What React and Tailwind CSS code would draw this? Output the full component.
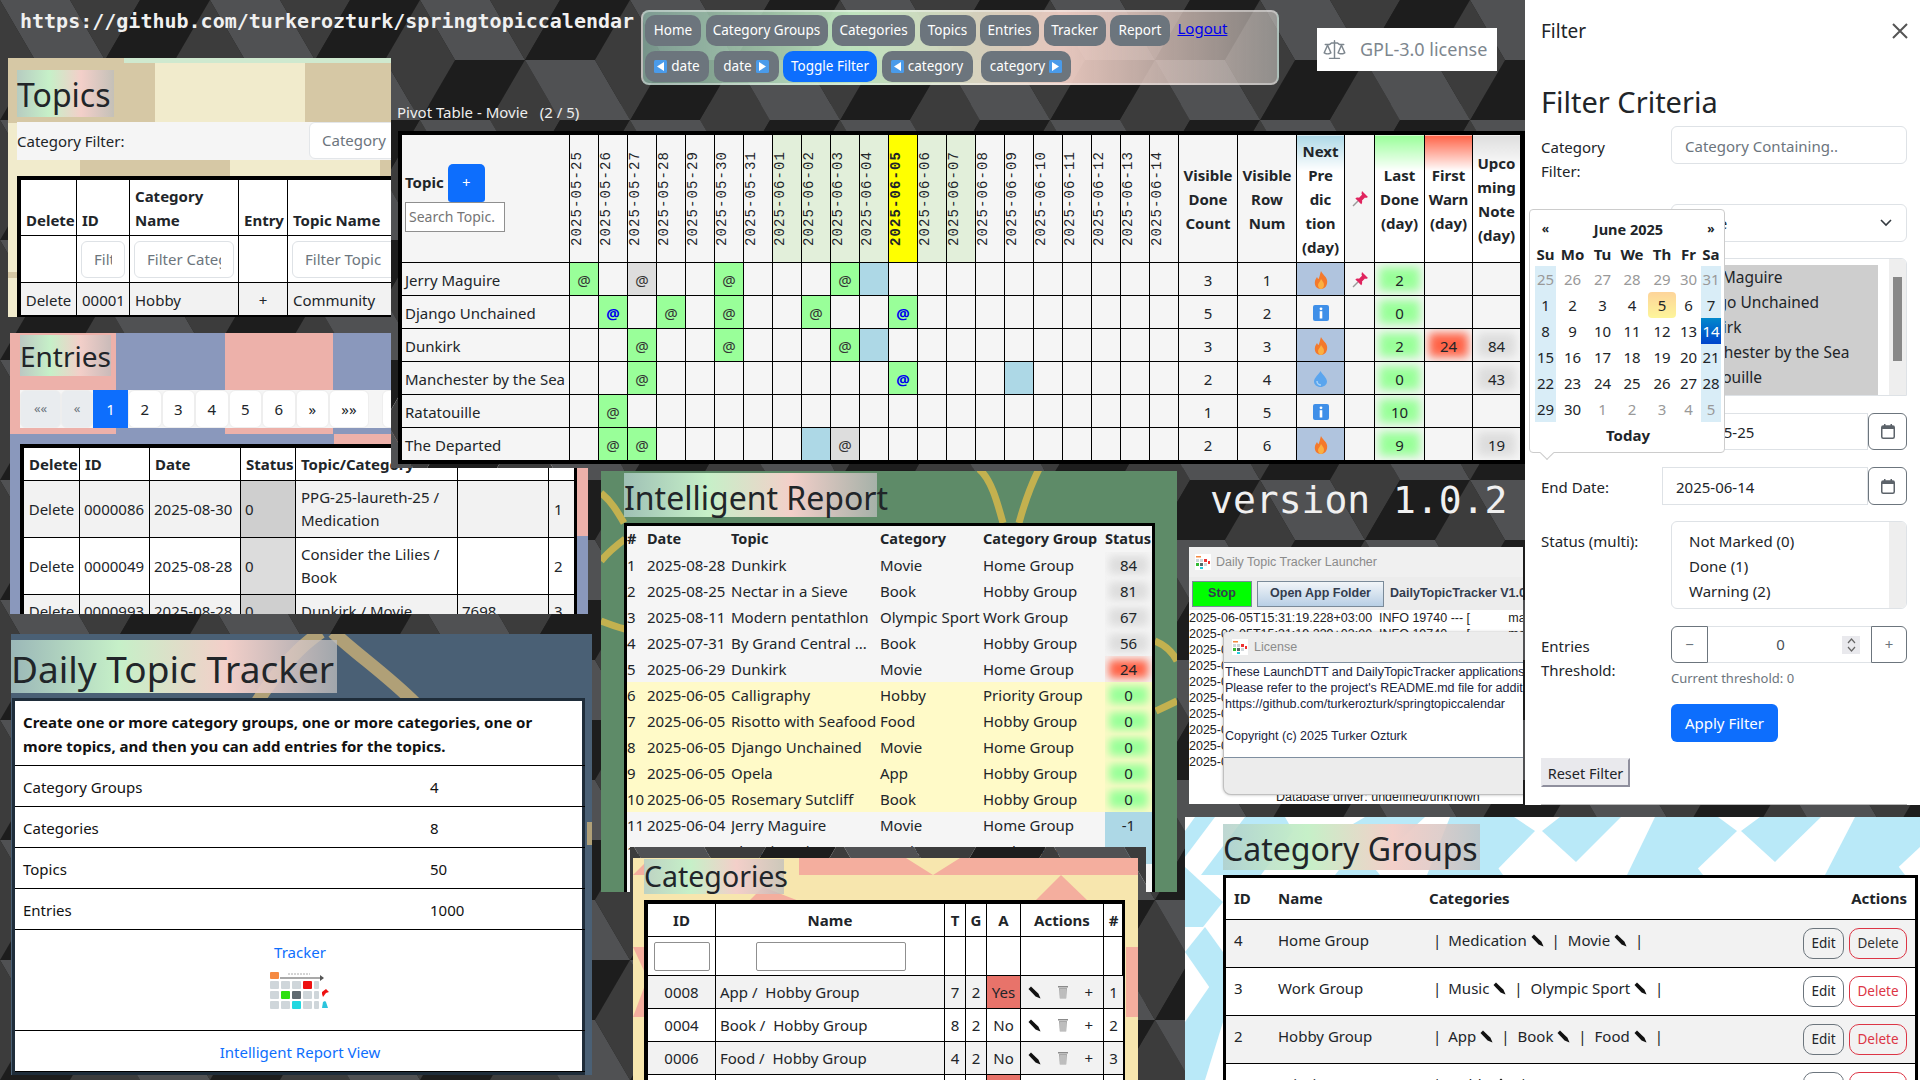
import React from 'react';
import { GoLaw } from 'react-icons/go';

const tri = [[70, 0], [70, 120], [175, 60], [-35, 60]];
const A = 70, H = 60;
function HexBg({ id, x = 0, y = 0 }) {
  return (
    <svg className="absolute left-0 top-0 w-full h-full" aria-hidden="true">
      <defs>
        <pattern id={id} width="210" height="120" patternUnits="userSpaceOnUse" patternTransform={`translate(${-x} ${-y})`}>
          {tri.map(([cx, cy], i) => (
            <g key={i}>
              <polygon fill="#1d1d1d" points={`${cx},${cy} ${cx - A},${cy} ${cx - A / 2},${cy - H} ${cx + A / 2},${cy - H}`} />
              <polygon fill="#505153" points={`${cx},${cy} ${cx - A},${cy} ${cx - A / 2},${cy + H} ${cx + A / 2},${cy + H}`} />
              <polygon fill="#3c3c3c" points={`${cx},${cy} ${cx + A / 2},${cy - H} ${cx + A},${cy} ${cx + A / 2},${cy + H}`} />
            </g>
          ))}
        </pattern>
      </defs>
      <rect width="100%" height="100%" fill={`url(#${id})`} />
    </svg>
  );
}

const titleBg = "font-normal bg-[linear-gradient(90deg,rgba(175,205,200,.8),#c6f0c8_33%,#f3cfc9_66%,rgba(190,190,190,.75))]";

function Fire() {
  return (
    <svg width="14" height="18" viewBox="0 0 14 18" className="mx-auto block">
      <path d="M7 0c1 3 5 5 6 9 1 5-2 9-6 9S0 15 1 10c.4-2 1.6-3 2-4 .5 1 1 2 1.6 2C5.6 6 6 3 7 0z" fill="#f4792b" />
      <path d="M7 8c1 2 3 3 3 6 0 2-1.400 4-3 4s-3-2-3-4c0-2 2-3 3-6z" fill="#fbb040" />
    </svg>
  );
}
function Info() {
  return (
    <svg width="16" height="16" viewBox="0 0 16 16" className="mx-auto block">
      <rect width="16" height="16" rx="2" fill="#3f8fe8" />
      <circle cx="8" cy="3.800" r="1.400" fill="#fff" />
      <rect x="6.700" y="6.200" width="2.600" height="7.300" fill="#fff" />
    </svg>
  );
}
function Drop() {
  return (
    <svg width="13" height="16" viewBox="0 0 13 16" className="mx-auto block">
      <path d="M6.500 0C8 3 13 7 13 10.500 13 13.500 10 16 6.500 16S0 13.500 0 10.500C0 7 5 3 6.500 0z" fill="#5aa5ee" />
      <path d="M3 10c0 2.500 2 4 4 4" stroke="#a9d2f7" strokeWidth="1.500" fill="none" />
    </svg>
  );
}
function Pin() {
  return (
    <svg width="16" height="16" viewBox="0 0 16 16" className="mx-auto block">
      <path d="M6 10 1 15" stroke="#9a9a9a" strokeWidth="1.500" />
      <path d="M10 0l6 6-2 1-1-.5-3 3c.5 2-.1 3-.8 3.800L3.400 7.500C4.200 6.800 5 6.200 7 6.700l3-3L9.500 2.500z" fill="#e0245e" />
    </svg>
  );
}
function Pencil() {
  return (
    <svg width="13" height="13" viewBox="0 0 13 13" className="inline-block align-[-1px]">
      <path d="M.5 3 3 .5l7.500 7.300L12.500 12.500 7.600 10.600z" fill="#111" />
    </svg>
  );
}
function Trash() {
  return (
    <svg width="10" height="14" viewBox="0 0 10 14" className="mx-auto block">
      <rect x="0" y="1" width="10" height="1.500" fill="#8a8a8a" />
      <path d="M1 3h8l-.8 10.500H1.800z" fill="#a8a8a8" />
      <path d="M3 4v9M5 4v9M7 4v9" stroke="#e6e6e6" strokeWidth=".7" />
    </svg>
  );
}
function Arrow({ dir }) {
  return (
    <svg width="13" height="13" viewBox="0 0 13 13" className="inline-block align-[-2px]">
      <rect width="13" height="13" rx="1.500" fill="#4a9bea" />
      <path d={dir === 'l' ? 'M10 2v9L3 6.500z' : 'M3 2v9l7-4.500z'} fill="#fff" />
    </svg>
  );
}
function Cal() {
  return (
    <svg width="14" height="15" viewBox="0 0 14 15" className="block">
      <rect x=".75" y="2" width="12.500" height="12.200" rx="1.500" fill="none" stroke="#5c636a" strokeWidth="1.500" />
      <rect x="1" y="2" width="12" height="3" fill="#5c636a" />
      <rect x="3" y="0" width="1.500" height="3" fill="#5c636a" />
      <rect x="9.500" y="0" width="1.500" height="3" fill="#5c636a" />
    </svg>
  );
}
function AppIcon() {
  return (
    <svg width="16" height="16" viewBox="0 0 16 16" className="block shrink-0">
      <rect width="16" height="16" fill="#fff" />
      <rect x="1" y="2" width="5" height="1.500" fill="#f58a42" />
      <rect x="1" y="5" width="3" height="3" fill="#cfd6da" /><rect x="5" y="5" width="3" height="3" fill="#cfd6da" /><rect x="9" y="5" width="3" height="3" fill="#e33" />
      <rect x="1" y="9" width="3" height="3" fill="#3b3" /><rect x="5" y="9" width="3" height="3" fill="#566" /><rect x="9" y="9" width="3" height="3" fill="#cfd6da" />
      <rect x="5" y="13" width="3" height="2" fill="#2cd" /><rect x="13" y="7" width="2" height="3" fill="#e33" />
    </svg>
  );
}
function TrackerIcon() {
  const colors = [
    ['#cfd6da', '#cfd6da', '#cfd6da', '#ee1111', '#cfd6da'],
    ['#cfd6da', '#2ee010', '#5f6a70', '#cfd6da', '#cfd6da'],
    ['#cfd6da', '#cfd6da', '#22d8e0', '#cfd6da', '#cfd6da'],
  ];
  return (
    <svg width="60" height="38" viewBox="0 0 60 38" className="mx-auto block">
      <rect x="0" y="0" width="9" height="7" rx="1" fill="#f58a42" />
      <path d="M10 6h43" stroke="#555" strokeWidth="1.200" /><path d="M50 3l4 3-4 3z" fill="#555" />
      <path d="M18 2h22" stroke="#aaa" strokeWidth="1" strokeDasharray="2 1" />
      {colors.map((r, j) => r.map((c, i) => (
        <rect key={`${j}-${i}`} x={i * 11} y={9 + j * 10} width={i === 4 ? 5 : 9} height="8" rx="1" fill={c} />
      )))}
      <path d="M52 20l4-3 3 3-3 1-3 4-1-3z" fill="#e11" />
      <path d="M53 30l2-1 1 1 2 6h-6z" fill="#2bc4dc" />
    </svg>
  );
}

const dates = ['2025-05-25','2025-05-26','2025-05-27','2025-05-28','2025-05-29','2025-05-30','2025-05-31','2025-06-01','2025-06-02','2025-06-03','2025-06-04','2025-06-05','2025-06-06','2025-06-07','2025-06-08','2025-06-09','2025-06-10','2025-06-11','2025-06-12','2025-06-13','2025-06-14'];
const pivotRows = [
  { n: 'Jerry Maguire', c: { 0: 'g', 2: 'x', 5: 'g', 9: 'g', 10: 'b' }, vd: 3, vr: 1, next: 'fire', pin: true, last: 2 },
  { n: 'Django Unchained', c: { 1: 'p', 3: 'g', 5: 'g', 8: 'g', 11: 'p' }, vd: 5, vr: 2, next: 'info', last: 0 },
  { n: 'Dunkirk', c: { 2: 'g', 5: 'g', 9: 'g', 10: 'b' }, vd: 3, vr: 3, next: 'fire', last: 2, warn: 24, up: 84 },
  { n: 'Manchester by the Sea', c: { 2: 'g', 11: 'p', 15: 'b' }, vd: 2, vr: 4, next: 'drop', last: 0, up: 43 },
  { n: 'Ratatouille', c: { 1: 'g' }, vd: 1, vr: 5, next: 'info', last: 10 },
  { n: 'The Departed', c: { 1: 'g', 2: 'g', 8: 'b', 9: 'x' }, vd: 2, vr: 6, next: 'fire', last: 9, up: 19 },
];

function DateCell({ v }) {
  if (v === 'g') return <td className="border border-black bg-[#99ff99] text-center text-[#333] p-0">@</td>;
  if (v === 'x') return <td className="border border-black bg-[#dddddd] text-center text-[#333] p-0">@</td>;
  if (v === 'b') return <td className="border border-black bg-[#add8e6] p-0"></td>;
  if (v === 'p') return <td className="border border-black bg-[#99ff99] text-center text-[#0000ee] font-bold p-0">@</td>;
  return <td className="border border-black p-0"></td>;
}

function Pivot() {
  return (
    <section className="absolute left-[391px] top-[104px] w-[1134px] h-[364px] overflow-hidden z-20">
      <HexBg id="hp" x={391} y={104} />
      <div className="relative h-[27px] pl-[6px] text-[15px] leading-[16px] text-[#eeeeee] whitespace-pre">Pivot Table - Movie   (2 / 5)</div>
      <div className="relative mx-[7px] w-[1127px] border-y-[3px] border-l-[3px] border-r-[5px] border-black bg-[#f5f5f5]">
        <table className="table-fixed border-collapse w-[1119px] text-[15px] text-[#212529] [&_td]:pt-[2px]">
          <colgroup>
            <col className="w-[168px]" />
            {dates.map(d => <col key={d} className="w-[29px]" />)}
            <col className="w-[59px]" /><col className="w-[59px]" /><col className="w-[48px]" /><col className="w-[30px]" /><col className="w-[50px]" /><col className="w-[48px]" /><col className="w-[48px]" />
          </colgroup>
          <thead>
            <tr className="h-[128px]">
              <th className="border border-black text-left font-normal p-0 align-middle">
                <div className="flex items-center pl-[3px]">
                  <b className="text-[15px] mr-[4px]">Topic</b>
                  <span className="w-[37px] h-[38px] bg-[#0d6efd] rounded-t-[5px] rounded-b-[3px] text-white text-[15px] flex items-center justify-center">+</span>
                </div>
                <div className="ml-[3px] mb-[2px] w-[100px] h-[30px] border border-[#8f8f8f] bg-white text-[#757575] px-[3px] text-[14px] leading-[27px] overflow-hidden whitespace-nowrap">Search Topic.</div>
              </th>
              {dates.map((d, i) => (
                <th key={d} className={i === 11 ? "border border-black p-0 bg-[#ffff00] font-bold" : (i >= 7 && i <= 13) ? "border border-black p-0 bg-[#e2efda] font-normal" : "border border-black p-0 font-normal"}>
                  <div className="[writing-mode:vertical-rl] rotate-180 mx-auto font-['Liberation_Mono',monospace] text-[14px] tracking-[1.100px] leading-none">{d}</div>
                </th>
              ))}
              <th className="border border-black font-bold leading-[24px] p-0">Visible<br />Done<br />Count</th>
              <th className="border border-black font-bold leading-[24px] p-0">Visible<br />Row<br />Num</th>
              <th className="border border-black font-bold leading-[24px] p-0 bg-[linear-gradient(180deg,#add8e6,#ffffff_28%)]">Next<br />Pre<br />dic<br />tion<br />(day)</th>
              <th className="border border-black p-0"><Pin /></th>
              <th className="border border-black font-bold leading-[24px] p-0 bg-[linear-gradient(180deg,#99ff99,#ffffff_28%)]">Last<br />Done<br />(day)</th>
              <th className="border border-black font-bold leading-[24px] p-0 bg-[linear-gradient(180deg,#ff6347,#ffffff_28%)]">First<br />Warn<br />(day)</th>
              <th className="border border-black font-bold leading-[24px] p-0 bg-[linear-gradient(180deg,#dddddd,#ffffff_28%)]">Upco<br />ming<br />Note<br />(day)</th>
            </tr>
          </thead>
          <tbody>
            {pivotRows.map(r => (
              <tr key={r.n} className="h-[33px]">
                <td className="border border-black pl-[3px] p-0 whitespace-nowrap overflow-hidden">{r.n}</td>
                {dates.map((d, i) => <DateCell key={d} v={r.c[i]} />)}
                <td className="border border-black text-center p-0">{r.vd}</td>
                <td className="border border-black text-center p-0">{r.vr}</td>
                <td className={r.next === 'info' ? "border border-black p-0" : "border border-black p-0 bg-[#b0c4de]"}>
                  {r.next === 'fire' ? <Fire /> : r.next === 'info' ? <Info /> : <Drop />}
                </td>
                <td className="border border-black p-0">{r.pin ? <Pin /> : null}</td>
                <td className="border border-black text-center p-0 bg-[#99ff99] shadow-[inset_0_0_10px_4px_#f5f5f5]">{r.last}</td>
                <td className={r.warn ? "border border-black text-center p-0 bg-[#ff6347] shadow-[inset_0_0_10px_4px_#f5f5f5]" : "border border-black p-0"}>{r.warn}</td>
                <td className={r.up ? "border border-black text-center p-0 bg-[#dddddd] shadow-[inset_0_0_10px_4px_#f5f5f5]" : "border border-black p-0"}>{r.up}</td>
              </tr>
            ))}
          </tbody>
        </table>
      </div>
    </section>
  );
}

function FilterBox({ text }) {
  return (
    <div className="h-[37px] border border-[#dee2e6] rounded-[6px] px-[12px] leading-[35px] text-[#6c757d]">
      <div className="overflow-hidden whitespace-nowrap">{text}</div>
    </div>
  );
}

function Topics() {
  return (
    <section className="absolute left-[8px] top-[58px] w-[383px] h-[259px] overflow-hidden bg-[#f1ebcc] z-10 text-[15px] text-[#212529]">
      <svg className="absolute left-0 top-0 w-full h-full" aria-hidden="true">
        <rect x="0" y="5" width="147" height="60" fill="#d6c8a5" />
        <rect x="297" y="5" width="86" height="60" fill="#d6c8a5" />
        <rect x="72" y="102" width="150" height="16" fill="#d6c8a5" />
        <rect x="372" y="102" width="11" height="16" fill="#d6c8a5" />
        <rect x="0" y="214" width="9" height="6" fill="#d6c8a5" />
        <rect x="0" y="0" width="383" height="5" fill="#d6c8a5" />
        <rect x="116" y="0" width="267" height="5" fill="#cfe9cf" />
      </svg>
      <div className="relative pl-[9px] pt-[12px]">
        <h2 className={`${titleBg} w-[97px] h-[47px] text-[32px] leading-[50px] text-[#212529] whitespace-nowrap`}>Topics</h2>
        <div className="mt-[5px] h-[38px] bg-[#f5f5f5] flex items-center relative overflow-hidden">
          <span>Category Filter:</span>
          <div className="absolute left-[292px] top-0 w-[120px] h-[37px] bg-white border border-[#e3e6e9] rounded-[6px] pl-[12px] leading-[35px] text-[#6c757d]">Category Containing</div>
        </div>
        <div className="mt-[16px] w-[420px] border-[3px] border-black bg-white">
          <table className="table-fixed border-collapse w-[414px]">
            <colgroup><col className="w-[56px]" /><col className="w-[53px]" /><col className="w-[109px]" /><col className="w-[49px]" /><col className="w-[147px]" /></colgroup>
            <thead>
              <tr className="h-[56px]">
                {['Delete', 'ID', <>Category<br />Name</>, 'Entry', 'Topic Name'].map((t, i) => (
                  <th key={i} className="border border-black text-left align-bottom font-bold leading-[24px] px-[5px] pb-[3px] whitespace-nowrap">{t}</th>
                ))}
              </tr>
              <tr className="h-[47px]">
                <td className="border border-black"></td>
                <td className="border border-black px-[4px]"><FilterBox text="Filter" /></td>
                <td className="border border-black px-[4px]"><FilterBox text="Filter Category" /></td>
                <td className="border border-black"></td>
                <td className="border border-black px-[4px]"><FilterBox text="Filter Topic" /></td>
              </tr>
            </thead>
            <tbody className="[&_td]:pt-[2px]">
              <tr className="h-[33px] bg-[#f2f2f2]">
                <td className="border border-black text-center">Delete</td>
                <td className="border border-black pl-[5px]">00001</td>
                <td className="border border-black pl-[5px]">Hobby</td>
                <td className="border border-black text-center">+</td>
                <td className="border border-black pl-[5px] whitespace-nowrap">Community</td>
              </tr>
            </tbody>
          </table>
        </div>
      </div>
    </section>
  );
}

function Entries() {
  const pg = [['««', 41, 0], ['«', 32, 0], ['1', 35, 2], ['2', 33.5, 1], ['3', 33.5, 1], ['4', 33.5, 1], ['5', 33.5, 1], ['6', 33.5, 1], ['»', 33.5, 1], ['»»', 40, 1]];
  const rows = [
    ['0000086', '2025-08-30', <>PPG-25-laureth-25 /<br />Medication</>, '', '1', 'h-[57px] bg-[#f2f2f2]', 'bg-[#cfcfcf]'],
    ['0000049', '2025-08-28', <>Consider the Lilies /<br />Book</>, '', '2', 'h-[57px] bg-white', 'bg-[#dcdcdc]'],
    ['0000993', '2025-08-28', <>Dunkirk / Movie</>, '7698', '3', 'h-[33px] bg-[#f2f2f2]', 'bg-[#cfcfcf]'],
  ];
  return (
    <section className="absolute left-[10px] top-[333px] w-[578px] h-[281px] overflow-hidden bg-[#8a98bc] z-10 text-[15px] text-[#212529]">
      <svg className="absolute left-0 top-0 w-full h-full" aria-hidden="true">
        <rect x="0" y="0" width="106" height="101" fill="#edb1aa" />
        <rect x="215" y="0" width="108" height="101" fill="#edb1aa" />
        <rect x="324" y="101" width="254" height="11" fill="#edb1aa" />
        <rect x="567" y="112" width="11" height="91" fill="#edb1aa" />
      </svg>
      <div className="relative pl-[10px] pt-[2px]">
        <h2 className={`${titleBg} w-[91px] h-[41px] text-[28px] leading-[42px] whitespace-nowrap`}>Entries</h2>
        <div className="mt-[14px] w-[400px] h-[38px] flex items-stretch bg-[#f5f5f5]">
          {pg.map(([t, w, k], i) => (
            <span key={i} style={{ width: w }} className={k === 2 ? "shrink-0 flex items-center justify-center bg-[#0d6efd] text-white" : k === 1 ? "shrink-0 flex items-center justify-center bg-white rounded-[6px] border border-[#eeeeee]" : "shrink-0 flex items-center justify-center bg-[#e9ecef] rounded-[6px] border border-[#eeeeee] text-[#6c757d] text-[13px]"}>{t}</span>
          ))}
          <span className="ml-[13px] w-[30px] shrink-0 bg-white rounded-[6px] border border-[#eeeeee]"></span>
        </div>
        <div className="mt-[16px] w-[557px] border-[3px] border-black bg-white">
          <table className="table-fixed border-collapse w-[551px]">
            <colgroup><col className="w-[56px]" /><col className="w-[70px]" /><col className="w-[91px]" /><col className="w-[55px]" /><col className="w-[162px]" /><col className="w-[91px]" /><col className="w-[26px]" /></colgroup>
            <thead>
              <tr className="h-[33px]">
                {['Delete', 'ID', 'Date', 'Status', 'Topic/Category', '', ''].map((t, i) => (
                  <th key={i} className="border border-black text-left font-bold pl-[5px] pr-0 whitespace-nowrap">{t}</th>
                ))}
              </tr>
            </thead>
            <tbody>
              {rows.map(r => (
                <tr key={r[0]} className={r[5]}>
                  <td className="border border-black text-center p-0">Delete</td>
                  <td className="border border-black pl-[4px] p-0">{r[0]}</td>
                  <td className="border border-black pl-[4px] p-0 whitespace-nowrap">{r[1]}</td>
                  <td className={`border border-black pl-[4px] p-0 ${r[6]}`}>0</td>
                  <td className="border border-black pl-[5px] p-0 leading-[23px]">{r[2]}</td>
                  <td className="border border-black pl-[4px] p-0">{r[3]}</td>
                  <td className="border border-black pl-[5px] p-0">{r[4]}</td>
                </tr>
              ))}
            </tbody>
          </table>
        </div>
      </div>
    </section>
  );
}

function Daily() {
  return (
    <section className="absolute left-[11px] top-[634px] w-[581px] h-[441px] overflow-hidden bg-[#4a6075] z-10 text-[15px] text-[#212529]">
      <svg className="absolute left-0 top-0 w-full h-full" aria-hidden="true">
        <path d="M245 70 C270 30 295 8 310 -2 M322 -2 C345 20 375 40 405 70" fill="none" stroke="#b0a077" strokeWidth="13" />
        <rect x="576" y="188" width="5" height="23" fill="#b0a077" />
      </svg>
      <div className="relative pt-[6px]">
        <h2 className={`${titleBg} w-[326px] h-[53px] text-[37px] leading-[58px] whitespace-nowrap`}>Daily Topic Tracker</h2>
        <div className="mt-[5px] ml-[1px] w-[573px] border-[3px] border-[#1f2d3a] bg-white">
          <table className="table-fixed border-collapse w-[570px] [&_td]:pt-[3px]">
            <colgroup><col className="w-[415px]" /><col /></colgroup>
            <tbody>
              <tr className="h-[64px]"><td colSpan={2} className="border-b border-black px-[8px] font-bold text-[#111] leading-[24px] text-[15px]">Create one or more category groups, one or more categories, one or<br />more topics, and then you can add entries for the topics.</td></tr>
              {[['Category Groups', 4], ['Categories', 8], ['Topics', 50], ['Entries', 1000]].map(([a, b]) => (
                <tr key={a} className="h-[41px] border-b border-black"><td className="px-[8px] text-[#111]">{a}</td><td className="text-[#111]">{b}</td></tr>
              ))}
              <tr className="h-[101px] border-b border-black">
                <td colSpan={2} className="text-center align-top">
                  <div className="mt-[7px] text-[#0d6efd] leading-[24px] mb-[8px]">Tracker</div>
                  <TrackerIcon />
                </td>
              </tr>
              <tr className="h-[41px] border-b border-black"><td colSpan={2} className="text-center text-[#0d6efd]">Intelligent Report View</td></tr>
            </tbody>
          </table>
        </div>
      </div>
    </section>
  );
}

const rep = [
  ['2025-08-28', 'Dunkirk', 'Movie', 'Home Group', '84', 'g'],
  ['2025-08-25', 'Nectar in a Sieve', 'Book', 'Hobby Group', '81', 'g'],
  ['2025-08-11', 'Modern pentathlon', 'Olympic Sport', 'Work Group', '67', 'g'],
  ['2025-07-31', 'By Grand Central ...', 'Book', 'Hobby Group', '56', 'g'],
  ['2025-06-29', 'Dunkirk', 'Movie', 'Home Group', '24', 'r'],
  ['2025-06-05', 'Calligraphy', 'Hobby', 'Priority Group', '0', 'n'],
  ['2025-06-05', 'Risotto with Seafood', 'Food', 'Hobby Group', '0', 'n'],
  ['2025-06-05', 'Django Unchained', 'Movie', 'Home Group', '0', 'n'],
  ['2025-06-05', 'Opela', 'App', 'Hobby Group', '0', 'n'],
  ['2025-06-05', 'Rosemary Sutcliff', 'Book', 'Hobby Group', '0', 'n'],
  ['2025-06-04', 'Jerry Maguire', 'Movie', 'Home Group', '-1', 'b'],
  ['2025-06-04', 'Electric Guitar', 'Movie', 'Work Group', '-1', 'b'],
];
const statusCls = {
  g: "text-center bg-[#dddddd] shadow-[inset_0_0_8px_4px_#f5f5f5]",
  r: "text-center bg-[#ff6347] shadow-[inset_0_0_8px_4px_#f5f5f5]",
  n: "text-center bg-[#99ff99] shadow-[inset_0_0_8px_4px_#fffac8]",
  b: "text-center bg-[#add8e6]",
};

function Report() {
  return (
    <section className="absolute left-[601px] top-[471px] w-[576px] h-[421px] overflow-hidden bg-[#5e8b68] z-10 text-[15px] text-[#212529]">
      <svg className="absolute left-0 top-0 w-full h-full" aria-hidden="true">
        <g fill="none" stroke="#c3b14f" strokeWidth="7">
          <path d="M0 22 C10 30 16 40 23 52" />
          <path d="M0 90 C8 80 16 74 24 68" />
          <path d="M0 150 C10 154 16 156 24 158" />
          <path d="M378 -2 C390 8 396 30 402 52" />
          <path d="M438 -2 C432 10 424 30 418 52" />
          <path d="M554 170 C566 175 572 182 576 190" />
          <path d="M555 240 C566 235 572 232 576 230" />
        </g>
      </svg>
      <div className="relative pl-[23px] pt-[2px]">
        <h2 className={`${titleBg} w-[253px] h-[44px] text-[32px] leading-[50px] whitespace-nowrap`}>Intelligent Report</h2>
        <div className="mt-[6px] w-[531px] h-[380px] border-[3px] border-black bg-[#f5f5f5] overflow-hidden">
          <table className="table-fixed border-collapse w-[525px]">
            <colgroup><col className="w-[20px]" /><col className="w-[84px]" /><col className="w-[149px]" /><col className="w-[103px]" /><col className="w-[122px]" /><col className="w-[47px]" /></colgroup>
            <thead>
              <tr className="h-[26px] text-left">
                {['#', 'Date', 'Topic', 'Category', 'Category Group', 'Status'].map(t => <th key={t} className="font-bold p-0 whitespace-nowrap text-[14.5px]">{t}</th>)}
              </tr>
            </thead>
            <tbody>
              {rep.map((r, i) => (
                <tr key={i} className={r[5] === 'n' ? "h-[26px] bg-[#fffac8]" : "h-[26px]"}>
                  <td className="p-0 whitespace-nowrap">{i + 1}</td>
                  <td className="p-0 whitespace-nowrap">{r[0]}</td>
                  <td className="p-0 whitespace-nowrap overflow-hidden">{r[1]}</td>
                  <td className="p-0 whitespace-nowrap">{r[2]}</td>
                  <td className="p-0 whitespace-nowrap">{r[3]}</td>
                  <td className={statusCls[r[5]]}>{r[4]}</td>
                </tr>
              ))}
            </tbody>
          </table>
        </div>
      </div>
    </section>
  );
}

function Categories() {
  const rows = [
    ['0008', 'App /  Hobby Group', 7, 2, 'Yes', 1],
    ['0004', 'Book /  Hobby Group', 8, 2, 'No', 2],
    ['0006', 'Food /  Hobby Group', 4, 2, 'No', 3],
    ['0001', 'Hobby /  Priority Group', 9, 2, 'Yes', 4],
  ];
  return (
    <section className="absolute left-[630px] top-[847px] w-[516px] h-[233px] overflow-hidden z-20 text-[15px] text-[#212529]">
      <HexBg id="hc" x={630} y={847} />
      <div className="absolute left-[3px] top-[11px] w-[505px] h-[222px] bg-[#f7e6ae]"></div>
      <svg className="absolute left-[3px] top-[11px] w-[505px] h-[222px]" aria-hidden="true">
        <polygon fill="#f4ae9e" points="166,0 273,0 300,17 327,0 505,0 505,17 166,17" />
        <polygon fill="#f4ae9e" points="116,43 130,29 166,43 166,43" />
        <polygon fill="#f4ae9e" points="402,43 428,17 455,43" />
        <polygon fill="#f4ae9e" points="0,17 12,5 12,17" />
        <rect x="493" y="89" width="12" height="70" fill="#f4ae9e" />
        <polygon fill="#f4ae9e" points="0,89 12,89 12,115" />
        <polygon fill="#f4ae9e" points="0,159 12,159 12,127" />
      </svg>
      <div className="relative pl-[14px] pt-[12px]">
        <h2 className={`${titleBg} w-[140px] h-[35px] text-[28.500px] leading-[34px] whitespace-nowrap`}>Categories</h2>
        <div className="mt-[6px] w-[481px] border-[3px] border-black bg-white">
          <table className="table-fixed border-collapse w-[476px]">
            <colgroup><col className="w-[68px]" /><col className="w-[229px]" /><col className="w-[21px]" /><col className="w-[21px]" /><col className="w-[34px]" /><col className="w-[83px]" /><col className="w-[20px]" /></colgroup>
            <thead>
              <tr className="h-[33px]">
                {['ID', 'Name', 'T', 'G', 'A', 'Actions', '#'].map(t => <th key={t} className="border border-black text-center font-bold p-0">{t}</th>)}
              </tr>
              <tr className="h-[39px]">
                <td className="border border-black p-0"><div className="mx-auto w-[56px] h-[29px] border border-[#8f8f8f] rounded-[2px] bg-white"></div></td>
                <td className="border border-black p-0"><div className="ml-[40px] w-[150px] h-[29px] border border-[#8f8f8f] rounded-[2px] bg-white"></div></td>
                <td className="border border-black"></td><td className="border border-black"></td><td className="border border-black"></td><td className="border border-black"></td><td className="border border-black"></td>
              </tr>
            </thead>
            <tbody>
              {rows.map((r, i) => (
                <tr key={r[0]} className={i % 2 === 0 ? "h-[33px] bg-[#f2f2f2]" : "h-[33px] bg-white"}>
                  <td className="border border-black text-center p-0">{r[0]}</td>
                  <td className="border border-black pl-[4px] p-0 whitespace-pre">{r[1]}</td>
                  <td className="border border-black text-center p-0">{r[2]}</td>
                  <td className="border border-black text-center p-0">{r[3]}</td>
                  <td className={r[4] === 'Yes' ? "border border-black text-center p-0 bg-[#e8736a]" : "border border-black text-center p-0"}>{r[4]}</td>
                  <td className="border border-black p-0">
                    <div className="flex items-center justify-between pl-[7px] pr-[10px]"><Pencil /><Trash /><span>+</span></div>
                  </td>
                  <td className="border border-black text-center p-0">{r[5]}</td>
                </tr>
              ))}
            </tbody>
          </table>
        </div>
      </div>
    </section>
  );
}

function Launcher() {
  const logs = ['2025-06-05T15:31:19.228+03:00  INFO 19740 --- [           main', '2025-06-05T15:31:19.239+03:00  INFO 19740 --- [           main'];
  return (
    <section className="absolute left-[1189px] top-[547px] w-[334px] h-[257px] overflow-hidden bg-white z-10 font-['Liberation_Sans',sans-serif] text-[12.500px] text-[#222]">
      <div className="h-[30px] bg-[#f0f0f0] flex items-center pl-[6px] gap-[5px] text-[#8b8b8b]"><AppIcon /><span>Daily Topic Tracker Launcher</span></div>
      <div className="h-[33px] bg-[#ececec] flex items-center pl-[3px] font-bold text-[12.500px] text-[#333c4e] whitespace-nowrap">
        <div className="w-[60px] h-[26px] shrink-0 bg-[#00ff00] border border-[#7a8a99] flex items-center justify-center">Stop</div>
        <div className="ml-[5px] w-[127px] h-[26px] shrink-0 bg-[linear-gradient(180deg,#f2f5f8,#b8cfe5)] border border-[#7a8a99] flex items-center justify-center">Open App Folder</div>
        <span className="ml-[6px]">DailyTopicTracker V1.0.2</span>
      </div>
      <div className="leading-[16px] whitespace-pre">
        {logs.concat(Array(8).fill('2025-06-05T15:31:20.000+03:00  INFO')).map((t, i) => <div key={i}>{t}</div>)}
      </div>
      <div className="absolute left-[87px] top-[241px] whitespace-nowrap">Database driver: undefined/unknown</div>
      <div className="absolute left-[34px] top-[85px] w-[310px] h-[163px] bg-[#ececec] rounded-bl-[8px] rounded-tl-[4px] border-l border-b border-[#c0c0c0] shadow-[0_0_3px_rgba(0,0,0,.3)]">
        <div className="h-[30px] flex items-center pl-[8px] gap-[6px] text-[#8b8b8b]"><AppIcon /><span>License</span></div>
        <div className="h-[96px] bg-white border-y border-[#7f8fa0] pl-[1px] leading-[16px] pt-[1px] whitespace-pre text-[#1a2440]">
          <div>These LaunchDTT and DailyTopicTracker applications are</div>
          <div>Please refer to the project's README.md file for additional</div>
          <div>https://github.com/turkerozturk/springtopiccalendar</div>
          <div>&nbsp;</div>
          <div>Copyright (c) 2025 Turker Ozturk</div>
        </div>
      </div>
    </section>
  );
}

function CalPopup() {
  const weeks = [
    [25, 26, 27, 28, 29, 30, 31],
    [1, 2, 3, 4, 5, 6, 7],
    [8, 9, 10, 11, 12, 13, 14],
    [15, 16, 17, 18, 19, 20, 21],
    [22, 23, 24, 25, 26, 27, 28],
    [29, 30, 1, 2, 3, 4, 5],
  ];
  return (
    <div className="absolute left-[4px] top-[209px] w-[196px] h-[244px] bg-white border border-[#cccccc] rounded-[4px] z-10 text-[15px] text-[#212529] px-[4px] pt-[6px]">
      <div className="grid grid-cols-[21px_33px_27px_32px_28px_25px_20px] pl-[1px] text-center">
        <div className="h-[26px] leading-[26px] text-[12px] font-bold">«</div>
        <div className="col-span-5 h-[26px] leading-[26px] font-bold text-[14.5px]">June 2025</div>
        <div className="h-[26px] leading-[26px] text-[12px] font-bold">»</div>
        {['Su', 'Mo', 'Tu', 'We', 'Th', 'Fr', 'Sa'].map(d => <div key={d} className="h-[24px] leading-[24px] font-bold whitespace-nowrap">{d}</div>)}
        {weeks.map((w, j) => w.map((d, i) => {
          const muted = (j === 0) || (j === 5 && i >= 2);
          const wk = i === 0 || i === 6;
          let cls = "h-[26px] leading-[27px]";
          if (j === 1 && i === 4) cls += " bg-[linear-gradient(180deg,#fdd49a,#fdf59a)] rounded-[4px]";
          else if (j === 2 && i === 6) cls += " bg-[linear-gradient(180deg,#0088cc,#0044cc)] text-white";
          else if (wk) cls += " bg-[#d9edf7]";
          if (muted) cls += " text-[#999999]";
          return <div key={`${j}-${i}`} className={cls}>{d}</div>;
        }))}
        <div className="col-span-7 h-[28px] leading-[26px] font-bold">Today</div>
      </div>
      <div className="absolute left-[12px] bottom-[-6px] w-[10px] h-[10px] bg-white border-r border-b border-[#cccccc] rotate-45"></div>
    </div>
  );
}

function Filter() {
  const label = "w-[130px] shrink-0 leading-[24px] text-[#212529]";
  return (
    <section className="absolute left-[1525px] top-0 w-[395px] h-[805px] bg-white z-30 text-[15px] text-[#212529]">
      <div className="flex items-center justify-between h-[51px] pt-[11px] pl-[16px] pr-[12px]">
        <span className="text-[19px]">Filter</span>
        <svg width="16" height="16" viewBox="0 0 16 16"><path d="M1 1l14 14M15 1 1 15" stroke="#555" strokeWidth="2" /></svg>
      </div>
      <div className="pl-[16px] pr-[13px]">
        <h2 className="text-[29px] leading-[38px] h-[38px] mt-[32px] mb-[5px] whitespace-nowrap">Filter Criteria</h2>
        <div className="flex h-[78px]">
          <div className={`${label} pt-[9px]`}>Category<br />Filter:</div>
          <div className="w-[236px] h-[38px] border border-[#dee2e6] rounded-[6px] px-[13px] leading-[38px] text-[#6c757d]">Category Containing..</div>
        </div>
        <div className="flex h-[54px]">
          <div className={label}></div>
          <div className="w-[236px] h-[38px] border border-[#dee2e6] rounded-[6px] pl-[13px] pr-[14px] leading-[36px] flex items-center justify-between">
            <span>Movie</span>
            <svg width="12" height="8" viewBox="0 0 12 8"><path d="M1 1l5 5 5-5" fill="none" stroke="#343a40" strokeWidth="1.600" /></svg>
          </div>
        </div>
        <div className="flex h-[155px]">
          <div className={label}></div>
          <div className="relative w-[236px] h-[138px] border border-[#dee2e6] pt-[6px] rounded-t-[6px] overflow-hidden">
            <div className="w-[206px] h-[131px] bg-[#cecece] pl-[12px] leading-[25px] text-[15.500px]">
              <div>Jerry Maguire</div><div>Django Unchained</div><div>Dunkirk</div><div>Manchester by the Sea</div><div>Ratatouille</div>
            </div>
            <div className="absolute right-0 top-0 w-[17px] h-full bg-[#eeeeee]">
              <div className="mx-auto mt-[18px] w-[9px] h-[84px] bg-[#888888]"></div>
            </div>
          </div>
        </div>
        <div className="flex h-[54px]">
          <div className="w-[121px] shrink-0 leading-[37px]">Start Date:</div>
          <div className="w-[206px] h-[37px] border border-[#dee2e6] pl-[13px] leading-[36px]">2025-05-25</div>
          <div className="w-[39px] h-[37px] border border-[#6c757d] rounded-[6px] flex items-center justify-center"><Cal /></div>
        </div>
        <div className="flex h-[54px]">
          <div className="w-[121px] shrink-0 leading-[40px]">End Date:</div>
          <div className="w-[206px] h-[38px] border border-[#dee2e6] pl-[13px] leading-[38px]">2025-06-14</div>
          <div className="w-[39px] h-[38px] border border-[#6c757d] rounded-[6px] flex items-center justify-center"><Cal /></div>
        </div>
        <div className="flex h-[105px]">
          <div className={`${label} pt-[8px]`}>Status (multi):</div>
          <div className="relative w-[236px] h-[88px] border border-[#dee2e6] rounded-[6px] pt-[7px] pl-[17px] leading-[25px] overflow-hidden">
            <div>Not Marked (0)</div><div>Done (1)</div><div>Warning (2)</div>
            <div className="absolute right-0 top-0 w-[17px] h-full bg-[#eeeeee]"></div>
          </div>
        </div>
        <div className="flex h-[78px]">
          <div className={`${label} pt-[8px]`}>Entries<br />Threshold:</div>
          <div className="w-[236px]">
            <div className="flex h-[37px]">
              <div className="w-[37px] border border-[#6c757d] rounded-l-[6px] flex items-center justify-center text-[#6c757d]">−</div>
              <div className="relative w-[163px] border-y border-[#dee2e6] text-center leading-[35px] text-[#495057] pr-[18px]">
                0
                <div className="absolute left-[134px] top-[9px] w-[18px] h-[18px] bg-[#e9e9ed] flex items-center justify-center">
                  <svg width="9" height="14" viewBox="0 0 9 14"><path d="M1 5l3.500-4L8 5M1 9l3.500 4L8 9" fill="none" stroke="#666" strokeWidth="1.200" /></svg>
                </div>
              </div>
              <div className="w-[36px] border border-[#6c757d] rounded-r-[6px] flex items-center justify-center text-[#6c757d]">+</div>
            </div>
            <div className="mt-[5px] text-[13px] leading-[20px] text-[#6c757d] whitespace-nowrap">Current threshold: 0</div>
          </div>
        </div>
        <div className="flex h-[54px]">
          <div className={label}></div>
          <div className="w-[107px] h-[38px] bg-[#0d6efd] text-white rounded-[6px] text-center leading-[39px]">Apply Filter</div>
        </div>
        <div className="w-[89px] h-[29px] bg-[#e9e9ed] border-2 border-[#e9e9ed] border-r-[#8f8f9d] border-b-[#8f8f9d] text-center leading-[27px] text-[14.5px] whitespace-nowrap">Reset Filter</div>
        <div className="mt-[17px] h-px bg-[#bbbbbb]"></div>
      </div>
      <CalPopup />
    </section>
  );
}

function Groups() {
  const rows = [
    ['4', 'Home Group', ['Medication', 'Movie'], 'bg-[#f2f2f2]', 'text-[#333]'],
    ['3', 'Work Group', ['Music', 'Olympic Sport'], 'bg-white', 'text-[#dc3545]'],
    ['2', 'Hobby Group', ['App', 'Book', 'Food'], 'bg-[#f2f2f2]', 'text-[#dc3545]'],
    ['1', 'Priority Group', ['Hobby'], 'bg-white', 'text-[#dc3545]'],
  ];
  return (
    <section className="absolute left-[1185px] top-[817px] w-[735px] h-[263px] overflow-hidden bg-white z-20 text-[15px] text-[#212529]">
      <svg className="absolute left-0 top-0 w-full h-full" aria-hidden="true">
        <g fill="#b9e9f8">
          <polygon points="108,14 76,58 16,58 60,0 100,0" />
          <polygon points="0,14 10,0 30,0 0,40" />
          <polygon points="156,14 180,0 240,0 191,45" />
          <polygon points="307,58 350,14 329,0 265,0 242,58" />
          <polygon points="357,14 375,0 436,0 391,45" />
          <polygon points="506,58 552,14 533,0 470,0 442,58" />
          <polygon points="556,14 575,0 636,0 590,45" />
          <polygon points="705,58 735,30 735,0 670,0 640,58" />
          <polygon points="280,58 318,58 300,32" />
          <polygon points="478,58 518,58 498,32" />
          <polygon points="680,58 720,58 700,32" />
          <polygon points="150,58 195,58 172,30" />
          <polygon points="0,50 0,110 18,110 38,85" />
          <polygon points="0,135 38,190 38,135 20,110" />
          <polygon points="0,205 38,150 38,205 20,263 0,263" />
        </g>
      </svg>
      <div className="relative pl-[38px] pt-[7px]">
        <h2 className={`${titleBg} w-[257px] h-[46px] text-[32px] leading-[50px] whitespace-nowrap`}>Category Groups</h2>
        <div className="mt-[5px] w-[695px] border-[3px] border-black bg-white">
          <table className="table-fixed border-collapse w-[689px]">
            <colgroup><col className="w-[44px]" /><col className="w-[151px]" /><col /><col className="w-[130px]" /></colgroup>
            <thead>
              <tr className="h-[41px] border-b border-black text-left">
                <th className="pl-[8px] font-bold">ID</th><th className="pl-[8px] font-bold">Name</th><th className="pl-[8px] font-bold">Categories</th><th className="pr-[8px] text-right font-bold">Actions</th>
              </tr>
            </thead>
            <tbody>
              {rows.map(r => (
                <tr key={r[0]} className={`h-[48px] border-b border-black ${r[3]}`}>
                  <td className="pl-[8px] pb-[5px]">{r[0]}</td>
                  <td className="pl-[8px] pb-[5px] whitespace-nowrap">{r[1]}</td>
                  <td className="pl-[12px] pb-[5px] whitespace-nowrap">
                    <span className="mr-[7px]">|</span>
                    {r[2].map(c => <span key={c}>{c} <Pencil /><span className="mx-[8px]">|</span></span>)}
                  </td>
                  <td>
                    <div className="flex justify-end gap-[5px] pr-[8px]">
                      <span className="w-[41px] h-[31px] border border-[#6c757d] rounded-[10px] text-center text-[13.5px] leading-[29px]">Edit</span>
                      <span className={`w-[58px] h-[31px] border border-[#dc3545] rounded-[10px] text-center text-[13.5px] leading-[29px] ${r[4]}`}>Delete</span>
                    </div>
                  </td>
                </tr>
              ))}
            </tbody>
          </table>
        </div>
      </div>
    </section>
  );
}

function Nav() {
  const btn = "h-[31px] rounded-[10px] bg-[#6c757d] text-white text-[13.5px] flex items-center justify-center whitespace-nowrap shrink-0";
  return (
    <nav className="absolute left-[641px] top-[10px] w-[638px] h-[75px] z-10 rounded-[8px] border-2 border-white/40 bg-[linear-gradient(90deg,rgba(150,195,180,.65),rgba(200,240,200,.92)_33%,rgba(245,210,200,.92)_66%,rgba(215,210,205,.55))] pl-[2px] pt-[3px]">
      <div className="flex gap-[4.500px] items-stretch">
        <a className={`${btn} w-[56px]`}>Home</a>
        <a className={`${btn} w-[122px]`}>Category Groups</a>
        <a className={`${btn} w-[83px]`}>Categories</a>
        <a className={`${btn} w-[56px]`}>Topics</a>
        <a className={`${btn} w-[59px]`}>Entries</a>
        <a className={`${btn} w-[62px]`}>Tracker</a>
        <a className={`${btn} w-[60px]`}>Report</a>
        <a className="ml-[3px] text-[15px] leading-[26px] text-[#0000ee] underline">Logout</a>
      </div>
      <div className="flex gap-[4.500px] mt-[5px]">
        <a className={`${btn} w-[64px] gap-[4px]`}><Arrow dir="l" />date</a>
        <a className={`${btn} w-[65px] gap-[4px]`}>date<Arrow dir="r" /></a>
        <a className="h-[31px] w-[94px] rounded-[10px] bg-[#0d6efd] text-white text-[13.5px] flex items-center justify-center whitespace-nowrap">Toggle Filter</a>
        <a className={`${btn} w-[91px] gap-[4px]`}><Arrow dir="l" />category</a>
        <a className={`${btn} w-[90px] gap-[4px] ml-[4px]`}>category<Arrow dir="r" /></a>
      </div>
    </nav>
  );
}

export default function App() {
  return (
    <div className="relative w-[1920px] h-[1080px] overflow-hidden bg-[#1d1d1d] font-['Noto_Sans',sans-serif]">
      <HexBg id="hb" />
      <div className="absolute left-[20px] top-[9px] font-['DejaVu_Sans_Mono',monospace] font-bold text-[20px] leading-[24px] text-[#f0f0f0] whitespace-nowrap">https://github.com/turkerozturk/springtopiccalendar</div>
      <Nav />
      <div className="absolute left-[1317px] top-[28px] w-[180px] h-[43px] bg-white z-10 flex items-center pl-[6px] text-[#7d868e] text-[18px]">
        <GoLaw size={23} className="shrink-0" />
        <span className="ml-[14px] whitespace-nowrap">GPL-3.0 license</span>
      </div>
      <Topics />
      <Entries />
      <Pivot />
      <Daily />
      <Report />
      <Categories />
      <div className="absolute left-[1210px] top-[477px] font-['DejaVu_Sans_Mono',monospace] text-[38px] leading-[46px] text-[#f0f0f0] whitespace-nowrap">version 1.0.2</div>
      <Launcher />
      <Groups />
      <Filter />
    </div>
  );
}
